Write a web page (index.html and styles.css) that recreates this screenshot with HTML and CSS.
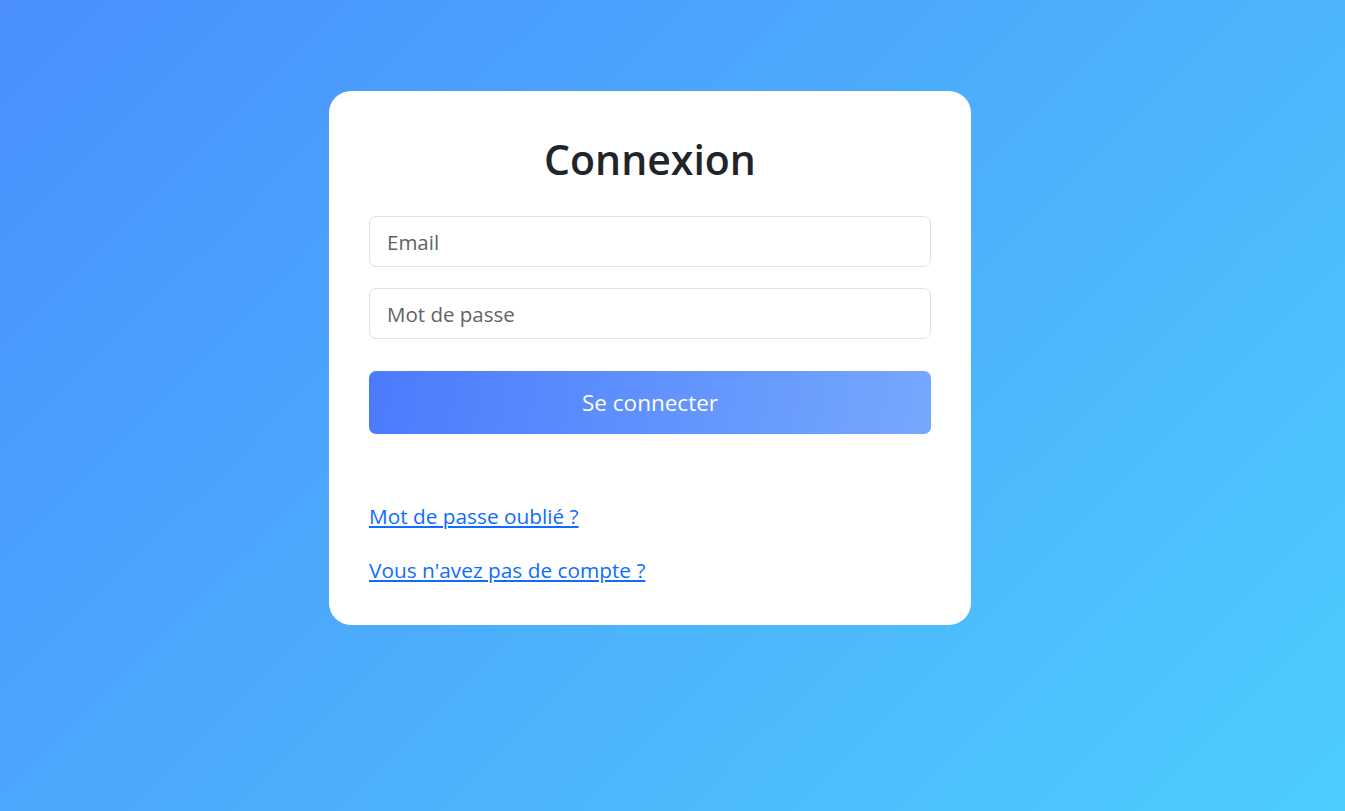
FILE: index.html
```html
<!DOCTYPE html>
<html lang="fr">
<head>
<meta charset="utf-8">
<title>Connexion</title>
<link rel="stylesheet" href="styles.css">
</head>
<body>
<div class="page">
  <div class="card">
    <h1 class="title">Connexion</h1>
    <form class="form">
      <input class="field" type="email" placeholder="Email">
      <input class="field" type="password" placeholder="Mot de passe">
      <button class="btn" type="button">Se connecter</button>
    </form>
    <div class="links">
      <a href="#" class="link">Mot de passe oublié ?</a>
      <a href="#" class="link">Vous n'avez pas de compte ?</a>
    </div>
  </div>
</div>
</body>
</html>
```
FILE: styles.css
```css
html, body {
  margin: 0;
  padding: 0;
}
body {
  min-height: 100vh;
  background: linear-gradient(135deg, #4a8ffd 0%, #4ecdfd 100%);
  font-family: "Open Sans", "Noto Sans", sans-serif;
  color: #212529;
}
.page {
  min-height: 100vh;
  box-sizing: border-box;
  padding: 91px 0 0 329px;
}
.card {
  width: 642px;
  box-sizing: border-box;
  background: #fff;
  border-radius: 22px;
  padding: 44px 40px 41px;
}
.title {
  margin: 0 0 32px;
  text-align: center;
  font-size: 41px;
  font-weight: 600;
  line-height: 1.2;
  color: #212529;
}
.form {
  display: flex;
  flex-direction: column;
}
.field {
  display: block;
  height: 51px;
  box-sizing: border-box;
  padding: 0 17px;
  border: 1px solid #dee2e6;
  border-radius: 7px;
  font-family: inherit;
  font-size: 20.5px;
  color: #212529;
  background: #fff;
  margin-bottom: 21px;
  outline: none;
}
.field::placeholder {
  color: #5f6367;
}
.form .field:nth-child(2) {
  margin-bottom: 32px;
}
.btn {
  height: 63px;
  border: 0;
  border-radius: 7px;
  background: linear-gradient(100deg, #4a7bfd 0%, #76a8fe 100%);
  color: #fff;
  font-family: inherit;
  font-size: 22.5px;
  cursor: pointer;
}
.links {
  display: flex;
  flex-direction: column;
  align-items: flex-start;
  gap: 26px;
  margin-top: 68px;
}
.link {
  font-size: 20.8px;
  line-height: 28px;
  color: #0d6efd;
  text-decoration: underline;
}
```
